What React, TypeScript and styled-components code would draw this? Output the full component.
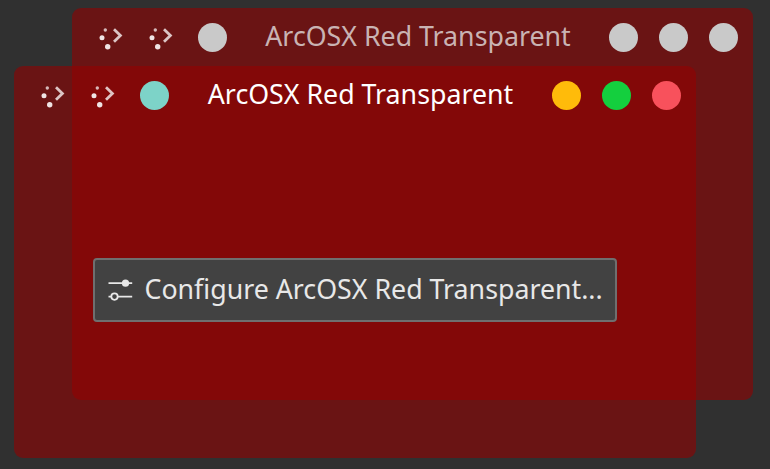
import React from 'react'
import styled, { createGlobalStyle } from 'styled-components'

const variables = {
  desktop: '#303030',
  glass: 'rgba(150, 0, 0, 0.576)',
  idle: '#c9c9c9'
}

const GlobalStyle = createGlobalStyle`
  html, body {
    margin: 0;
    height: 100%;
    background-color: ${variables.desktop};
    font-family: "Noto Sans", sans-serif;
  }
`
const Desktop = styled.div`
  position: relative;
  width: 770px;
  height: 469px;
  overflow: hidden;
`
const Window = styled.section<{ $x: number; $y: number; $active?: boolean }>`
  position: absolute;
  left: ${p => p.$x}px;
  top: ${p => p.$y}px;
  width: ${p => (p.$active ? 682 : 681)}px;
  height: 392px;
  padding-top: 2px;
  box-sizing: border-box;
  display: flex;
  flex-direction: column;
  background-color: ${variables.glass};
  border-radius: 9px;
  color: ${p => (p.$active ? '#ffffff' : '#c9b3b3')};
`
const TitleBar = styled.header`
  display: flex;
  align-items: center;
  height: 55px;
  padding: 0 15px 0 27px;
  flex-shrink: 0;
`
const LeftButtons = styled.div`
  display: flex;
  align-items: center;
  gap: 25.5px;
`
const RightButtons = styled.div`
  display: flex;
  align-items: center;
  gap: 21px;
`
const Title = styled.div`
  flex: 1;
  text-align: center;
  font-size: 26.75px;
  line-height: 34px;
  padding-bottom: 3px;
  white-space: nowrap;
`
const Dot = styled.span<{ $color: string }>`
  display: block;
  width: 29px;
  height: 29px;
  border-radius: 50%;
  background-color: ${p => p.$color};
`
const Body = styled.div`
  flex: 1;
  display: flex;
  align-items: center;
  justify-content: center;
  padding-bottom: 2px;
`
const ConfigureButton = styled.button`
  display: flex;
  align-items: center;
  gap: 10.5px;
  width: 524px;
  height: 64px;
  padding: 0 0 2px 13px;
  box-sizing: border-box;
  background-color: #424242;
  border: 2px solid #6f6f6f;
  border-radius: 4px;
  color: #e8e8e8;
  font-family: inherit;
  font-size: 26.75px;
  white-space: nowrap;
`
const MenuSvg = styled.svg`
  display: block;
  width: 24px;
  height: 24px;
  color: #f0e4e4;
`
const SlidersSvg = styled.svg`
  display: block;
  width: 26px;
  height: 26px;
  margin-top: 2px;
`

const MenuIcon: React.FC = () => (
  <MenuSvg viewBox="0 0 24 24">
    <circle cx="6.3" cy="4" r="1.7" fill="currentColor" opacity="0.8" />
    <circle cx="3" cy="11.7" r="2.5" fill="currentColor" />
    <circle cx="8.7" cy="20.7" r="2.7" fill="currentColor" />
    <path
      d="M15 3.3 L21.4 9.5 L15 15.7"
      fill="none"
      stroke="currentColor"
      strokeWidth="2.8"
      opacity="0.85"
    />
  </MenuSvg>
)

const SlidersIcon: React.FC = () => (
  <SlidersSvg viewBox="0 0 26 26">
    <path d="M0.5 6.2 H24.2 M0.5 19.6 H24.2" stroke="#e8e8e8" strokeWidth="1.8" />
    <circle cx="17.5" cy="6.2" r="3.6" fill="#e8e8e8" />
    <circle cx="6.5" cy="19.6" r="3.2" fill="#424242" stroke="#e8e8e8" strokeWidth="1.8" />
  </SlidersSvg>
)

const TITLE = 'ArcOSX Red Transparent'

const App: React.FC = () => (
  <Desktop>
    <GlobalStyle />
    <Window $x={72} $y={8}>
      <TitleBar>
        <LeftButtons>
          <MenuIcon />
          <MenuIcon />
          <Dot $color={variables.idle} />
        </LeftButtons>
        <Title>{TITLE}</Title>
        <RightButtons>
          <Dot $color={variables.idle} />
          <Dot $color={variables.idle} />
          <Dot $color={variables.idle} />
        </RightButtons>
      </TitleBar>
    </Window>
    <Window $x={14} $y={66} $active>
      <TitleBar>
        <LeftButtons>
          <MenuIcon />
          <MenuIcon />
          <Dot $color="#7dd3c8" />
        </LeftButtons>
        <Title>{TITLE}</Title>
        <RightButtons>
          <Dot $color="#ffbb0a" />
          <Dot $color="#14cf3e" />
          <Dot $color="#f8515c" />
        </RightButtons>
      </TitleBar>
      <Body>
        <ConfigureButton>
          <SlidersIcon />
          Configure ArcOSX Red Transparent...
        </ConfigureButton>
      </Body>
    </Window>
  </Desktop>
)

export default App
